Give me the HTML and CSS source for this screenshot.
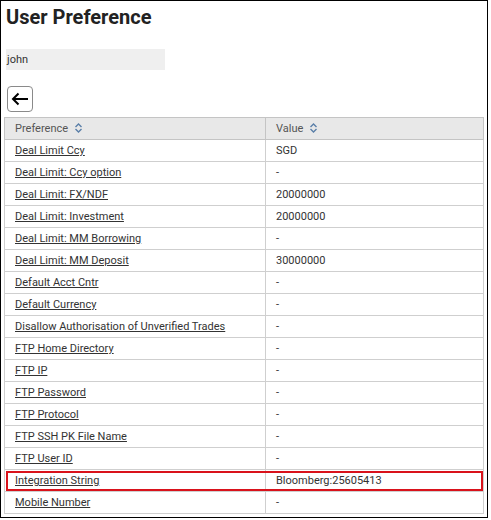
FILE: index.html
```html
<!DOCTYPE html>
<html>
<head>
<meta charset="utf-8">
<link rel="stylesheet" href="styles.css">
</head>
<body>
<div class="frame">
  <h1 class="title">User Preference</h1>
  <div class="user-field">john</div>
  <button class="back-btn" aria-label="Back">
    <svg width="18" height="14" viewBox="0 0 18 14"><path d="M17 7H2M7.5 1.5L2 7l5.5 5.5" fill="none" stroke="#000" stroke-width="2"/></svg>
  </button>
  <table class="prefs">
    <thead>
      <tr>
        <th class="col-pref">Preference <svg class="sort" width="9" height="10" viewBox="0 0 9 10"><path d="M1.5 4L4.5 1l3 3M1.5 6l3 3 3-3" fill="none" stroke="#5a7fa8" stroke-width="1.4"/></svg></th>
        <th>Value <svg class="sort" width="9" height="10" viewBox="0 0 9 10"><path d="M1.5 4L4.5 1l3 3M1.5 6l3 3 3-3" fill="none" stroke="#5a7fa8" stroke-width="1.4"/></svg></th>
      </tr>
    </thead>
    <tbody>
      <tr><td><a href="#">Deal Limit Ccy</a></td><td>SGD</td></tr>
      <tr><td><a href="#">Deal Limit: Ccy option</a></td><td>-</td></tr>
      <tr><td><a href="#">Deal Limit: FX/NDF</a></td><td>20000000</td></tr>
      <tr><td><a href="#">Deal Limit: Investment</a></td><td>20000000</td></tr>
      <tr><td><a href="#">Deal Limit: MM Borrowing</a></td><td>-</td></tr>
      <tr><td><a href="#">Deal Limit: MM Deposit</a></td><td>30000000</td></tr>
      <tr><td><a href="#">Default Acct Cntr</a></td><td>-</td></tr>
      <tr><td><a href="#">Default Currency</a></td><td>-</td></tr>
      <tr><td><a href="#">Disallow Authorisation of Unverified Trades</a></td><td>-</td></tr>
      <tr><td><a href="#">FTP Home Directory</a></td><td>-</td></tr>
      <tr><td><a href="#">FTP IP</a></td><td>-</td></tr>
      <tr><td><a href="#">FTP Password</a></td><td>-</td></tr>
      <tr><td><a href="#">FTP Protocol</a></td><td>-</td></tr>
      <tr><td><a href="#">FTP SSH PK File Name</a></td><td>-</td></tr>
      <tr><td><a href="#">FTP User ID</a></td><td>-</td></tr>
      <tr class="highlight"><td><a href="#">Integration String</a></td><td>Bloomberg:25605413</td></tr>
      <tr><td><a href="#">Mobile Number</a></td><td>-</td></tr>
    </tbody>
  </table>
</div>
</body>
</html>
```
FILE: styles.css
```css
html, body {
  margin: 0;
  padding: 0;
  background: #fff;
}
body {
  font-family: Roboto, "Liberation Sans", sans-serif;
  color: #333;
}
.frame {
  width: 488px;
  height: 518px;
  border: 1px solid #000;
  box-sizing: border-box;
  padding: 4px 3px 0 3px;
  overflow: hidden;
}
.title {
  margin: 0;
  font-size: 20px;
  font-weight: 700;
  color: #222;
  line-height: 24px;
  padding-left: 2px;
}
.user-field {
  margin: 20px 0 0 2px;
  width: 159px;
  height: 21px;
  background: #efefef;
  font-size: 11px;
  line-height: 21px;
  color: #333;
  padding-left: 1px;
  box-sizing: border-box;
}
.back-btn {
  display: flex;
  align-items: center;
  justify-content: center;
  margin: 16px 0 0 3px;
  width: 26px;
  height: 26px;
  padding: 0;
  border: 1px solid #8a8a8a;
  border-radius: 4px;
  background: #fff;
}
.prefs {
  margin-top: 5px;
  width: 480px;
  border-collapse: collapse;
  font-size: 11px;
}
.prefs th, .prefs td {
  border: 1px solid #cfcfcf;
  height: 21px;
  padding: 0 10px;
  text-align: left;
  vertical-align: middle;
  white-space: nowrap;
}
.prefs th {
  background: #e8e8e8;
  font-weight: 400;
  color: #555;
  border-color: #c4c4c4;
}
.prefs th.col-pref {
  width: 240px;
}
.sort {
  vertical-align: -1px;
  margin-left: 3px;
}
.prefs td a {
  color: #333;
  text-decoration: underline;
}
.prefs td {
  color: #333;
}
.highlight {
  outline: 2px solid #d9121b;
  outline-offset: -3px;
}
```
